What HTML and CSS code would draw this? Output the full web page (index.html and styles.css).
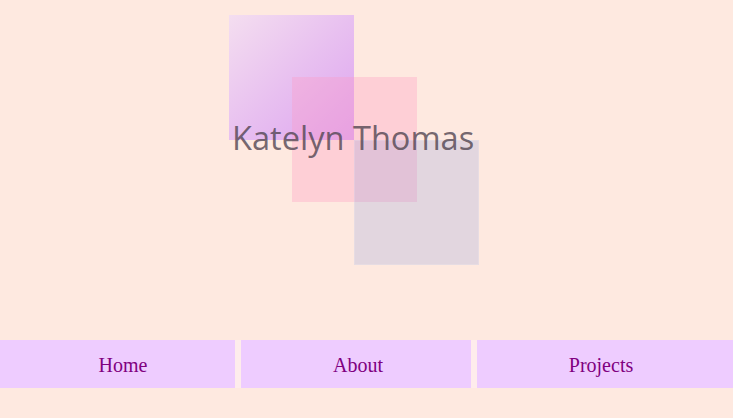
FILE: index.html
```html
<!DOCTYPE html>
<html>
<head>
<meta charset="utf-8">
<link rel="stylesheet" href="styles.css">
</head>
<body>
<header class="header">
  <div class="logo">
    <div class="sq sq1"></div>
    <div class="sq sq2"></div>
    <div class="sq sq3"></div>
    <span class="logo-text">Katelyn Thomas</span>
  </div>
</header>
<nav class="nav">
  <a class="nav-item nav-home" href="#">Home</a>
  <a class="nav-item nav-about" href="#">About</a>
  <a class="nav-item nav-projects" href="#">Projects</a>
</nav>
</body>
</html>
```
FILE: styles.css
```css
html, body {
  margin: 0;
  padding: 0;
  background: #fee9e0;
  font-family: "Liberation Serif", "Times New Roman", serif;
}
.header {
  height: 340px;
  display: flex;
  justify-content: flex-start;
}
.logo {
  position: relative;
  margin-left: 229px;
  margin-top: 15px;
  width: 250px;
  height: 250px;
}
.sq {
  position: absolute;
  width: 125px;
  height: 125px;
}
.sq1 {
  left: 0;
  top: 0;
  background: linear-gradient(135deg, #f4def0 0%, #e8c0f0 50%, #dda4f0 100%);
}
.sq2 {
  left: 63px;
  top: 62px;
  background: rgba(255, 152, 193, 0.32);
}
.sq3 {
  left: 125px;
  top: 125px;
  background: rgba(136, 150, 219, 0.23);
  box-shadow: inset 0 0 0 1px rgba(255, 255, 255, 0.15);
}
.logo-text {
  position: absolute;
  left: 3px;
  top: 100px;
  font-family: "Open Sans", sans-serif;
  font-size: 32.6px;
  color: rgba(80, 68, 80, 0.8);
  white-space: nowrap;
}
.nav {
  display: grid;
  grid-template-columns: 235px 230px 1fr;
  column-gap: 6px;
  background: #feecec;
  height: 48px;
}
.nav-item {
  background: #eeccff;
  color: #800080;
  text-decoration: none;
  font-size: 20px;
  display: flex;
  align-items: center;
  justify-content: center;
  padding-top: 3px;
}
.nav-home { padding-left: 11px; }
.nav-about { padding-left: 4px; }
.nav-projects { padding-right: 8px; }
```
